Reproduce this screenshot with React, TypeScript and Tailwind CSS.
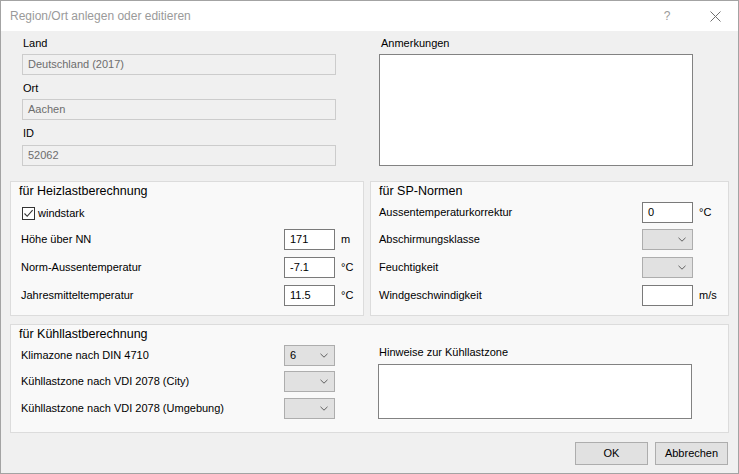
import React from "react";

function Chevron() {
  return (
    <svg width="8" height="5" viewBox="0 0 8 5" className="block">
      <path d="M0.5 0.8 L4 4.2 L7.5 0.8" fill="none" stroke="#606060" strokeWidth="1" />
    </svg>
  );
}

function ReadOnly({ value }: { value: string }) {
  return (
    <div className="h-[21px] w-[314px] border border-[#cccccc] bg-[#f0f0f0] text-[#6d6d6d] pl-[5px] flex items-center text-[11px] leading-none">
      {value}
    </div>
  );
}

function TextBox({ value }: { value?: string }) {
  return (
    <div className="h-[21px] w-[51px] border border-[#7a7a7a] bg-white pl-[5px] flex items-center text-[11px] leading-none text-black">
      {value}
    </div>
  );
}

function Select({ value }: { value?: string }) {
  return (
    <div className="h-[21px] w-[51px] border border-[#adadad] bg-[#e1e1e1] pl-[5px] pr-[6px] flex items-center justify-between text-[11px] leading-none text-black">
      <span>{value}</span>
      <Chevron />
    </div>
  );
}

function Row({
  label,
  labelW,
  labelPl,
  children,
  unit,
  mt,
}: {
  label: string;
  labelW: string;
  labelPl: string;
  children: React.ReactNode;
  unit?: string;
  mt: string;
}) {
  return (
    <div className={`flex items-center h-[21px] ${mt}`}>
      <div className={`${labelW} ${labelPl} text-[11px] leading-[15px] text-black whitespace-nowrap`}>{label}</div>
      {children}
      {unit && <div className="ml-[6px] text-[11px] leading-[15px] text-black">{unit}</div>}
    </div>
  );
}

export default function App() {
  return (
    <div className="w-[739px] h-[474px] flex flex-col border border-[#a3a3a3] font-['Liberation_Sans',Arial,sans-serif] overflow-hidden">
      {/* Title bar */}
      <div className="h-[30px] bg-white flex items-center justify-between shrink-0">
        <div className="pl-[9px] text-[12px] text-[#9a9a9a] leading-none">Region/Ort anlegen oder editieren</div>
        <div className="flex items-center h-full">
          <div className="text-[12px] text-[#9a9a9a] w-[14px] text-center mr-[36px] leading-none">?</div>
          <svg width="11" height="11" viewBox="0 0 11 11" className="mr-[17px]">
            <path d="M0.5 0.5 L10.5 10.5 M10.5 0.5 L0.5 10.5" stroke="#707070" strokeWidth="1" />
          </svg>
        </div>
      </div>

      {/* Body */}
      <div className="flex-1 bg-[#f0f0f0] px-[9px] flex flex-col">
        {/* Top section */}
        <div className="flex h-[135px]">
          <div className="ml-[12px] w-[314px] flex flex-col">
            <div className="h-[23px] pt-[5px] pl-[1px] text-[11px] leading-[15px] text-black">Land</div>
            <ReadOnly value="Deutschland (2017)" />
            <div className="h-[24px] pt-[6px] pl-[1px] text-[11px] leading-[15px] text-black">Ort</div>
            <ReadOnly value="Aachen" />
            <div className="h-[25px] pt-[6px] pl-[1px] text-[11px] leading-[15px] text-black">ID</div>
            <ReadOnly value="52062" />
          </div>
          <div className="ml-[43px] w-[314px] flex flex-col">
            <div className="h-[23px] pt-[5px] pl-[2px] text-[11px] leading-[15px] text-black">Anmerkungen</div>
            <div className="h-[112px] w-[314px] border border-[#828282] bg-white" />
          </div>
        </div>

        {/* Groups row */}
        <div className="flex mt-[15px] h-[135px] gap-[6px]">
          <div className="w-[354px] border border-[#dcdcdc] bg-[#f9f9f9] flex flex-col">
            <div className="pl-[8px] text-[12.5px] leading-[18px] text-black">für Heizlastberechnung</div>
            <div className="h-[26px] flex items-center pl-[11px]">
              <div className="w-[13px] h-[13px] border border-[#333333] bg-white flex items-center justify-center">
                <svg width="11" height="11" viewBox="0 0 11 11">
                  <path d="M1.5 5.5 L4.2 8.3 L9.6 2.2" fill="none" stroke="#333333" strokeWidth="1.1" />
                </svg>
              </div>
              <div className="ml-[3px] text-[11px] leading-[15px] text-black">windstark</div>
            </div>
            <Row label="Höhe über NN" labelW="w-[273px]" labelPl="pl-[10px]" unit="m" mt="mt-[3px]">
              <TextBox value="171" />
            </Row>
            <Row label="Norm-Aussentemperatur" labelW="w-[273px]" labelPl="pl-[10px]" unit="°C" mt="mt-[7px]">
              <TextBox value="-7.1" />
            </Row>
            <Row label="Jahresmitteltemperatur" labelW="w-[273px]" labelPl="pl-[10px]" unit="°C" mt="mt-[7px]">
              <TextBox value="11.5" />
            </Row>
          </div>
          <div className="flex-1 border border-[#dcdcdc] bg-[#f9f9f9] flex flex-col">
            <div className="pl-[8px] text-[12.5px] leading-[18px] text-black">für SP-Normen</div>
            <Row label="Aussentemperaturkorrektur" labelW="w-[271px]" labelPl="pl-[8px]" unit="°C" mt="mt-[2px]">
              <TextBox value="0" />
            </Row>
            <Row label="Abschirmungsklasse" labelW="w-[271px]" labelPl="pl-[8px]" mt="mt-[6px]">
              <Select />
            </Row>
            <Row label="Feuchtigkeit" labelW="w-[271px]" labelPl="pl-[8px]" mt="mt-[7px]">
              <Select />
            </Row>
            <Row label="Windgeschwindigkeit" labelW="w-[271px]" labelPl="pl-[8px]" unit="m/s" mt="mt-[7px]">
              <TextBox />
            </Row>
          </div>
        </div>

        {/* Kühllast group */}
        <div className="mt-[8px] h-[109px] border border-[#dcdcdc] bg-[#f9f9f9] flex flex-col">
          <div className="pl-[8px] text-[12.5px] leading-[18px] text-black">für Kühllastberechnung</div>
          <div className="flex">
            <div className="flex flex-col">
              <Row label="Klimazone nach DIN 4710" labelW="w-[273px]" labelPl="pl-[10px]" mt="mt-[2px]">
                <Select value="6" />
              </Row>
              <Row label="Kühllastzone nach VDI 2078 (City)" labelW="w-[273px]" labelPl="pl-[10px]" mt="mt-[5px]">
                <Select />
              </Row>
              <Row label="Kühllastzone nach VDI 2078 (Umgebung)" labelW="w-[273px]" labelPl="pl-[10px]" mt="mt-[6px]">
                <Select />
              </Row>
            </div>
            <div className="ml-[43px] flex flex-col">
              <div className="h-[21px] pt-[2px] pl-[1px] text-[11px] leading-[15px] text-black">Hinweise zur Kühllastzone</div>
              <div className="h-[55px] w-[314px] border border-[#828282] bg-white" />
            </div>
          </div>
        </div>

        {/* Buttons */}
        <div className="mt-[9px] flex justify-end gap-[7px] mr-[1px]">
          <div className="w-[73px] h-[23px] border border-[#adadad] bg-[#e1e1e1] flex items-center justify-center text-[11px] text-black">OK</div>
          <div className="w-[73px] h-[23px] border border-[#adadad] bg-[#e1e1e1] flex items-center justify-center text-[11px] text-black">Abbrechen</div>
        </div>
      </div>
    </div>
  );
}
